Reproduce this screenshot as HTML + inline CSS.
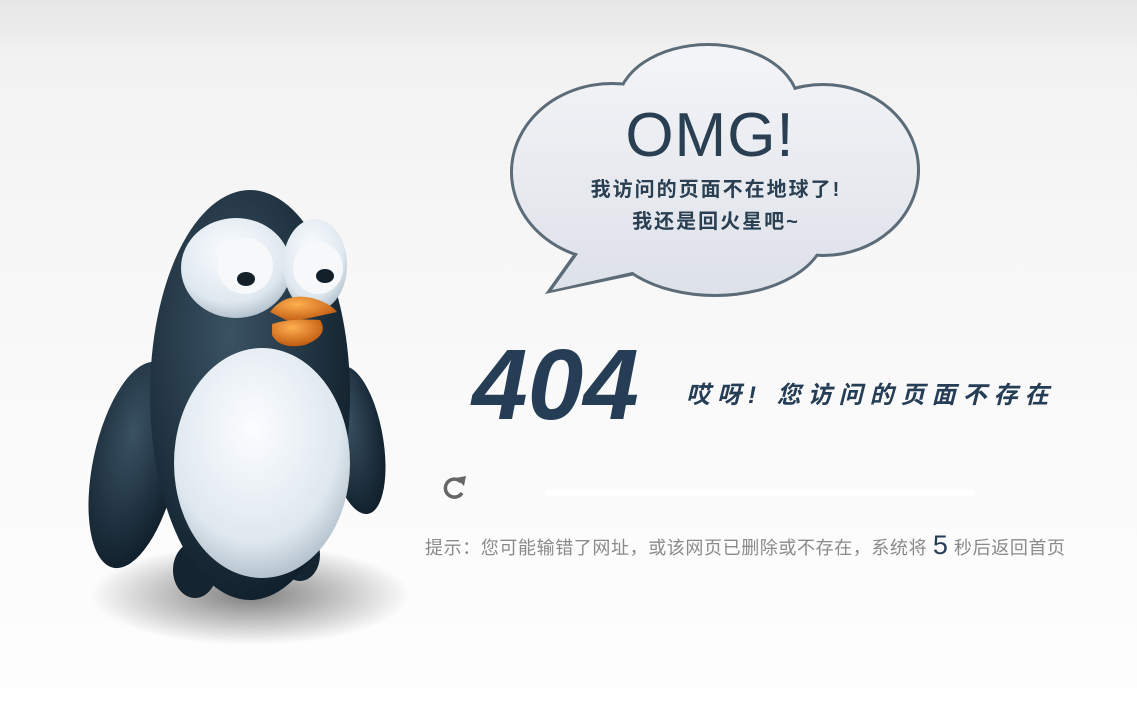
<!DOCTYPE html>
<html><head><meta charset="utf-8"><style>
html,body{margin:0;padding:0;width:1137px;height:722px;overflow:hidden;background:linear-gradient(#e6e6e6 0,#f2f2f2 60px,#f8f8f8 300px,#fefefe 722px);font-family:"Liberation Sans","Noto Sans CJK SC",sans-serif;position:relative}
.abs{position:absolute}
</style></head><body>
<svg class="abs" style="left:0;top:0" width="1137" height="722">
<defs>
<radialGradient id="sh" cx="50%" cy="50%" r="50%"><stop offset="0" stop-color="#000" stop-opacity=".5"/><stop offset=".6" stop-color="#000" stop-opacity=".2"/><stop offset="1" stop-color="#000" stop-opacity="0"/></radialGradient>
<radialGradient id="dk" cx="40%" cy="35%" r="70%"><stop offset="0" stop-color="#3a5263"/><stop offset="1" stop-color="#0f1e2a"/></radialGradient>
<radialGradient id="wh" cx="45%" cy="35%" r="70%"><stop offset="0" stop-color="#fbfdff"/><stop offset=".7" stop-color="#dfe8ef"/><stop offset="1" stop-color="#a9b8c4"/></radialGradient>
<radialGradient id="bk" cx="40%" cy="30%" r="70%"><stop offset="0" stop-color="#ffb050"/><stop offset="1" stop-color="#c05a10"/></radialGradient>
<linearGradient id="cl" gradientUnits="userSpaceOnUse" x1="0" y1="45" x2="0" y2="295"><stop offset="0" stop-color="#f4f5f8"/><stop offset="1" stop-color="#dde1e8"/></linearGradient>
</defs>
<ellipse cx="250" cy="595" rx="160" ry="50" fill="url(#sh)"/>
<ellipse cx="135" cy="465" rx="42" ry="105" transform="rotate(12 135 465)" fill="url(#dk)"/>
<ellipse cx="355" cy="440" rx="28" ry="75" transform="rotate(-10 355 440)" fill="url(#dk)"/>
<ellipse cx="195" cy="570" rx="22" ry="28" fill="#142430"/>
<ellipse cx="300" cy="555" rx="20" ry="26" fill="#142430"/>
<ellipse cx="250" cy="395" rx="100" ry="205" fill="url(#dk)"/>
<ellipse cx="236" cy="268" rx="55" ry="50" fill="url(#wh)"/>
<ellipse cx="315" cy="265" rx="32" ry="46" fill="url(#wh)"/>
<ellipse cx="245" cy="266" rx="28" ry="28" fill="#f6f8fa"/>
<ellipse cx="318" cy="268" rx="25" ry="26" fill="#f6f8fa"/>
<ellipse cx="246" cy="279" rx="9" ry="7" fill="#132029"/>
<ellipse cx="325" cy="276" rx="9" ry="7" fill="#132029"/>
<ellipse cx="262" cy="463" rx="88" ry="115" fill="url(#wh)"/>
<path d="M270 312 Q285 292 312 298 Q330 303 337 312 Q310 318 290 322 Z" fill="url(#bk)"/>
<path d="M272 324 Q290 318 320 320 Q330 335 305 345 Q280 350 272 335 Z" fill="url(#bk)"/>
<g fill="#5c6b78">
<ellipse cx="708" cy="105" rx="92" ry="62"/>
<ellipse cx="612" cy="172" rx="102" ry="90"/>
<ellipse cx="823" cy="170" rx="97" ry="87"/>
<ellipse cx="715" cy="230" rx="112" ry="67"/>
<polygon points="585,238 545,294 650,272"/>
</g>
<g fill="url(#cl)">
<ellipse cx="708" cy="105" rx="89" ry="59"/>
<ellipse cx="612" cy="172" rx="99" ry="87"/>
<ellipse cx="823" cy="170" rx="94" ry="84"/>
<ellipse cx="715" cy="230" rx="109" ry="64"/>
<ellipse cx="715" cy="165" rx="150" ry="80"/>
<polygon points="588,240 552,290 650,268"/>
</g>
<path d="M461 482 A9 9 0 1 0 462 493" fill="none" stroke="#666" stroke-width="3.5"/>
<polygon points="456,478 466,476 464,486" fill="#666"/>
<rect x="545" y="490" width="430" height="6" fill="#fff"/>
</svg>
<div class="abs" style="left:560px;top:96px;width:300px;text-align:center;font-size:62px;color:#2a3f52;letter-spacing:1px;line-height:80px">OMG!</div>
<div class="abs" style="left:540px;top:174px;width:352px;text-align:center;font-size:20px;font-weight:bold;color:#2a3f52;line-height:32px;letter-spacing:2px">我访问的页面不在地球了!<br>我还是回火星吧~</div>
<div class="abs" style="left:472px;top:330px;font-size:100px;font-style:italic;font-weight:bold;color:#253d55;line-height:110px">404</div>
<div class="abs" style="left:686px;top:380px;font-size:24px;font-style:italic;font-weight:bold;color:#253d55;letter-spacing:7px;line-height:32px;white-space:nowrap">哎呀! 您访问的页面不存在</div>
<div class="abs" style="left:425px;top:530px;font-size:18px;color:#8a8a8a;line-height:30px;white-space:nowrap;letter-spacing:0.6px">提示：您可能输错了网址，或该网页已删除或不存在，系统将 <span style="font-size:27px;color:#253d55">5</span> 秒后返回首页</div>
</body></html>
